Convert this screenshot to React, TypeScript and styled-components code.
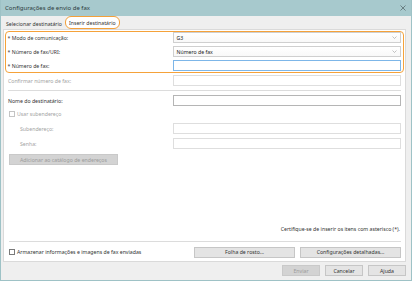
import styled, { createGlobalStyle } from "styled-components";

const GlobalStyle = createGlobalStyle`
  html, body {
    margin: 0;
    padding: 0;
    background: #ffffff;
  }
  body {
    font-family: "Noto Sans", "Liberation Sans", sans-serif;
  }
  * {
    box-sizing: border-box;
  }
`;

const Window = styled.div`
  width: 412px;
  height: 281px;
  display: flex;
  flex-direction: column;
  background: #efefef;
  border: 1px solid #9ec2c6;
  border-top: none;
  font-size: 5.2px;
  color: #333333;
`;

const TitleBar = styled.div`
  height: 16px;
  flex: none;
  display: flex;
  align-items: center;
  justify-content: space-between;
  padding: 0 5px 0 4px;
  background: #a7c9cd;
  color: #2c3b3d;
  font-size: 6px;
`;

const CloseIcon = () => (
  <svg width="6" height="6" viewBox="0 0 6 6">
    <path d="M0.5 0.5 L5.5 5.5 M5.5 0.5 L0.5 5.5" stroke="#5b6d70" strokeWidth="0.8" />
  </svg>
);

const TabRow = styled.div`
  height: 13px;
  flex: none;
  display: flex;
  align-items: flex-end;
  padding-left: 4px;
`;

const Tab = styled.div<{ $active?: boolean }>`
  height: ${(p) => (p.$active ? "13px" : "11px")};
  display: flex;
  align-items: center;
  padding: 0 ${(p) => (p.$active ? "3px" : "1px")};
  margin-right: 2px;
  color: #333333;
  background: ${(p) => (p.$active ? "#ffffff" : "transparent")};
  border: ${(p) => (p.$active ? "1.5px solid #f3a03a" : "none")};
  border-radius: 6px;
`;

const Panel = styled.div`
  flex: 1;
  display: flex;
  flex-direction: column;
  margin: 0 5px 0 2px;
  padding: 1px 0 3px 0;
  background: #ffffff;
  border: 1px solid #dadada;
`;

const Highlight = styled.div`
  display: grid;
  gap: 3px;
  margin: 0 1px;
  padding: 0 1.5px 1px 1.5px;
  border: 1.5px solid #f5a23a;
  border-radius: 4px;
`;

const Section = styled.div`
  display: flex;
  flex-direction: column;
  padding: 0 4px;
`;

const Row = styled.div<{ $mt?: number; $indent?: number }>`
  display: grid;
  grid-template-columns: 165px 228px;
  align-items: center;
  height: 11px;
  margin-top: ${(p) => p.$mt ?? 0}px;

  & > span:first-child {
    padding-left: ${(p) => p.$indent ?? 0}px;
  }
`;

const Label = styled.span<{ $disabled?: boolean }>`
  color: ${(p) => (p.$disabled ? "#a3a3a3" : "#333333")};
  white-space: nowrap;
`;

const Field = styled.div<{ $tone?: "blue" | "dark" | "light" }>`
  height: 11px;
  display: flex;
  align-items: center;
  justify-content: space-between;
  padding: 0 3px;
  background: #ffffff;
  border: 1px solid
    ${(p) =>
      p.$tone === "blue" ? "#7db6e8" : p.$tone === "dark" ? "#b5b5b5" : "#dedede"};
  color: #222222;
`;

const SelectField = styled(Field)`
  border-color: #cfcfcf;
  background: linear-gradient(#ffffff, #f8f8f8);
`;

const Chevron = () => (
  <svg width="5" height="3" viewBox="0 0 5 3">
    <path d="M0.5 0.5 L2.5 2.5 L4.5 0.5" fill="none" stroke="#9a9a9a" strokeWidth="0.6" />
  </svg>
);

const Separator = styled.div<{ $my: string }>`
  height: 1px;
  background: #dcdcdc;
  margin: ${(p) => p.$my};
`;

const CheckRow = styled.label<{ $disabled?: boolean; $mt?: number }>`
  display: flex;
  align-items: center;
  gap: 2px;
  height: 8px;
  margin-top: ${(p) => p.$mt ?? 0}px;
  padding-left: 1px;
  color: ${(p) => (p.$disabled ? "#a3a3a3" : "#333333")};
  white-space: nowrap;
`;

const Box = styled.span<{ $disabled?: boolean }>`
  width: 6px;
  height: 6px;
  flex: none;
  background: #ffffff;
  border: 0.8px solid ${(p) => (p.$disabled ? "#c4c4c4" : "#7a7a7a")};
`;

const Button = styled.div<{ $w: number; $disabled?: boolean }>`
  width: ${(p) => p.$w}px;
  height: 11px;
  flex: none;
  display: flex;
  align-items: center;
  justify-content: center;
  background: ${(p) => (p.$disabled ? "#d3d3d3" : "#e4e4e4")};
  border: 1px solid ${(p) => (p.$disabled ? "#c9c9c9" : "#c6c6c6")};
  color: ${(p) => (p.$disabled ? "#9b9b9b" : "#333333")};
  white-space: nowrap;
`;

const Spacer = styled.div`
  flex: 1;
`;

const Note = styled.div`
  height: 8px;
  display: flex;
  align-items: center;
  justify-content: flex-end;
  padding-right: 1px;
`;

const BottomRow = styled.div`
  display: flex;
  align-items: center;
  gap: 5px;
  height: 12px;

  & > label {
    margin-right: auto;
  }
`;

const Footer = styled.div`
  height: 18px;
  flex: none;
  display: flex;
  align-items: center;
  justify-content: flex-end;
  gap: 5px;
  padding: 0 5px 1px 0;
`;

export default function App() {
  return (
    <>
      <GlobalStyle />
      <Window>
        <TitleBar>
          <span>Configurações de envio de fax</span>
          <CloseIcon />
        </TitleBar>
        <TabRow>
          <Tab>Selecionar destinatário</Tab>
          <Tab $active>Inserir destinatário</Tab>
        </TabRow>
        <Panel>
          <Highlight>
            <Row>
              <Label>* Modo de comunicação:</Label>
              <SelectField>
                <span>G3</span>
                <Chevron />
              </SelectField>
            </Row>
            <Row>
              <Label>* Número de fax/URI:</Label>
              <SelectField>
                <span>Número de fax</span>
                <Chevron />
              </SelectField>
            </Row>
            <Row>
              <Label>* Número de fax:</Label>
              <Field $tone="blue" />
            </Row>
          </Highlight>
          <Section>
            <Row $mt={2}>
              <Label $disabled>Confirmar número de fax:</Label>
              <Field $tone="light" />
            </Row>
            <Separator $my="4px 0 4px 0" />
            <Row>
              <Label>Nome do destinatário:</Label>
              <Field $tone="dark" />
            </Row>
            <CheckRow $disabled $mt={4}>
              <Box $disabled />
              Usar subendereço
            </CheckRow>
            <Row $mt={5} $indent={12}>
              <Label $disabled>Subendereço:</Label>
              <Field $tone="light" />
            </Row>
            <Row $mt={4} $indent={12}>
              <Label $disabled>Senha:</Label>
              <Field $tone="light" />
            </Row>
            <div style={{ marginTop: 5, paddingLeft: 1 }}>
              <Button $w={109} $disabled>
                Adicionar ao catálogo de endereços
              </Button>
            </div>
          </Section>
          <Spacer />
          <Section>
            <Note>Certifique-se de inserir os itens com asterisco (*).</Note>
            <Separator $my="8px 0 4px 1px" />
            <BottomRow>
              <CheckRow>
                <Box />
                Armazenar informações e imagens de fax enviadas
              </CheckRow>
              <Button $w={101}>Folha de rosto...</Button>
              <Button $w={101}>Configurações detalhadas...</Button>
            </BottomRow>
          </Section>
        </Panel>
        <Footer>
          <Button $w={38} $disabled>
            Enviar
          </Button>
          <Button $w={38}>Cancelar</Button>
          <Button $w={38}>Ajuda</Button>
        </Footer>
      </Window>
    </>
  );
}
